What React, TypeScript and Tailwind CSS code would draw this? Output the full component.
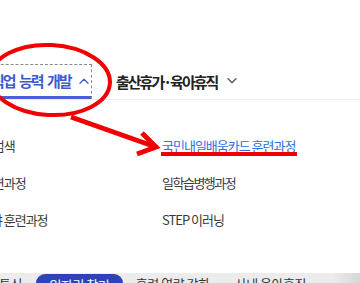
import React from "react";

function ChevronUp({ className }: { className?: string }) {
  return (
    <svg className={className} width="10" height="6" viewBox="0 0 10 6" fill="none">
      <path d="M1 5.2 L5 1.2 L9 5.2" stroke="currentColor" strokeWidth="1.3" strokeLinecap="round" strokeLinejoin="round" />
    </svg>
  );
}

function ChevronDown({ className }: { className?: string }) {
  return (
    <svg className={className} width="10" height="6" viewBox="0 0 10 6" fill="none">
      <path d="M1 0.8 L5 4.8 L9 0.8" stroke="currentColor" strokeWidth="1.3" strokeLinecap="round" strokeLinejoin="round" />
    </svg>
  );
}

export default function App() {
  return (
    <div className="relative w-[360px] h-[283px] overflow-hidden bg-white font-['Noto_Sans_CJK_KR','Noto_Sans',sans-serif] flex flex-col">
      <div className="pt-[64px]">
        <div className="flex items-stretch h-[36px] border-b border-[#ededed]">
          <div className="ml-[-9px] w-[101px] shrink-0 flex flex-col border-t border-r border-dashed border-[#8a8a8a] h-[35px]">
            <div className="flex-1 flex items-center pr-[2px] text-[#3d5bcf]">
              <span className="text-[15px] font-bold tracking-[-2px] [word-spacing:3px] leading-none whitespace-nowrap">직업 능력 개발</span>
              <ChevronUp className="ml-auto" />
            </div>
            <div className="h-[3px] bg-[#4862d6]" />
          </div>
          <div className="ml-[24px] flex items-center pb-[1px] text-[#222]">
            <span className="text-[15px] font-bold tracking-[-2px] leading-none whitespace-nowrap">출산휴가·육아휴직</span>
            <ChevronDown className="ml-[10px] text-[#555]" />
          </div>
        </div>
      </div>

      <div className="pt-[27px] ml-[-53px] grid grid-cols-[215px_1fr] text-[13px] tracking-[-1px] text-[#3a3a3a] whitespace-nowrap">
        <div className="h-[37px] flex items-center">훈련과정 검색</div>
        <div className="h-[37px] flex items-center">
          <span className="text-[#2f6fe0] underline underline-offset-[2px]">국민내일배움카드 훈련과정</span>
        </div>
        <div className="h-[37px] flex items-center">사업주 훈련과정</div>
        <div className="h-[37px] flex items-center tracking-[-1.5px]">일학습병행과정</div>
        <div className="h-[37px] flex items-center">신기술분야 훈련과정</div>
        <div className="h-[37px] flex items-center">STEP 이러닝</div>
      </div>

      <div className="mt-auto h-[10px] bg-[#ececec] flex items-start overflow-hidden relative whitespace-nowrap">
        <div className="ml-[-24px] pt-[4px] text-[13px] leading-none text-[#333] tracking-[-0.5px]">정보통신</div>
        <div className="ml-[14px] mt-[1px] w-[87px] shrink-0 h-[20px] rounded-t-[9px] bg-[#2f43b6] text-white text-[13px] leading-none pt-[4px] text-center tracking-[-0.5px]">일자리 찾기</div>
        <div className="ml-[13px] pt-[4px] text-[13px] leading-none text-[#333] tracking-[-0.5px]">훈련 역량 강화</div>
        <div className="ml-[10px] pt-[4px] text-[13px] leading-none text-[#333]">·</div>
        <div className="ml-[8px] pt-[4px] text-[13px] leading-none text-[#333] tracking-[-0.5px]">사내 육아휴직</div>
        <div className="absolute right-0 top-0 h-full w-[28px] bg-gradient-to-r from-[#ececec] to-[#d6d6d6]" />
      </div>

      <svg className="absolute inset-0 pointer-events-none" width="360" height="283" viewBox="0 0 360 283">
        <ellipse cx="50" cy="80" rx="60" ry="35" fill="none" stroke="#f00000" strokeWidth="4" transform="rotate(3 50 80)" />
        <line x1="71" y1="117" x2="153" y2="146" stroke="#f00000" strokeWidth="5" />
        <path d="M142 133 L156 147 L137 154" fill="none" stroke="#f00000" strokeWidth="5" strokeLinejoin="miter" />
        <rect x="161" y="152" width="136" height="4" fill="#f00000" />
      </svg>
    </div>
  );
}
